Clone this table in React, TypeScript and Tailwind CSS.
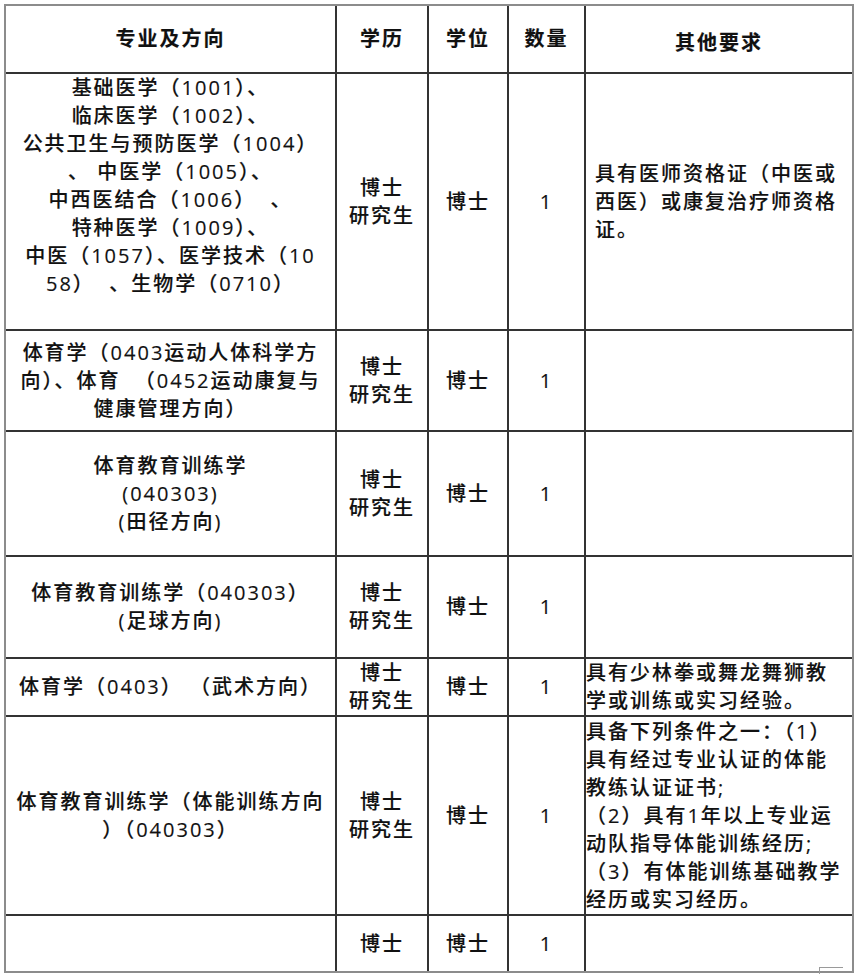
import React from 'react';

type Row = {
  major: string[];
  majorTop?: boolean;
  edu: string[];
  degree: string;
  count: string;
  other: string[];
  otherPad: string;
};

const rows: Row[] = [
  {
    major: [
      '基础医学（1001）、',
      '临床医学（1002）、',
      '公共卫生与预防医学（1004）',
      '、 中医学（1005）、',
      '中西医结合（1006）  、',
      '特种医学（1009）、',
      '中医（1057）、医学技术（10',
      '58）  、生物学（0710）',
    ],
    majorTop: true,
    edu: ['博士', '研究生'],
    degree: '博士',
    count: '1',
    other: ['具有医师资格证（中医或', '西医）或康复治疗师资格', '证。'],
    otherPad: 'pl-[9px]',
  },
  {
    major: ['体育学（0403运动人体科学方', '向）、体育  （0452运动康复与', '健康管理方向）'],
    edu: ['博士', '研究生'],
    degree: '博士',
    count: '1',
    other: [],
    otherPad: 'pl-[9px]',
  },
  {
    major: ['体育教育训练学', '(040303)', '(田径方向)'],
    edu: ['博士', '研究生'],
    degree: '博士',
    count: '1',
    other: [],
    otherPad: 'pl-[9px]',
  },
  {
    major: ['体育教育训练学（040303）', '(足球方向)'],
    edu: ['博士', '研究生'],
    degree: '博士',
    count: '1',
    other: [],
    otherPad: 'pl-[9px]',
  },
  {
    major: ['体育学（0403） （武术方向）'],
    edu: ['博士', '研究生'],
    degree: '博士',
    count: '1',
    other: ['具有少林拳或舞龙舞狮教', '学或训练或实习经验。'],
    otherPad: 'pl-0',
  },
  {
    major: ['体育教育训练学（体能训练方向', '）（040303）'],
    edu: ['博士', '研究生'],
    degree: '博士',
    count: '1',
    other: [
      '具备下列条件之一：（1）',
      '具有经过专业认证的体能',
      '教练认证证书;',
      '（2）具有1年以上专业运',
      '动队指导体能训练经历;',
      '（3）有体能训练基础教学',
      '经历或实习经历。',
    ],
    otherPad: 'pl-0',
  },
  {
    major: [],
    edu: ['博士'],
    degree: '博士',
    count: '1',
    other: [],
    otherPad: 'pl-0',
  },
];

function Lines({ lines }: { lines: string[] }) {
  return (
    <>
      {lines.map((l, i) => (
        <div key={i} className="whitespace-pre">
          {l}
        </div>
      ))}
    </>
  );
}

export default function App() {
  const cell = 'bg-white flex flex-col items-center justify-center';

  return (
    <div className="min-h-screen bg-white pt-[4px] pl-[4px] text-[#111] text-[20px] leading-[28px] tracking-[2px] font-medium [-webkit-text-stroke:0.15px_#111] font-['Open_Sans','Noto_Sans_CJK_SC',sans-serif]">
      <div className="relative w-fit border-2 border-[#8c8c8c]">
        <div className="grid grid-cols-[329px_90px_78px_75px_266px] grid-rows-[66px_255px_99px_123px_100px_56px_197px_55px] gap-[2px] bg-[#333]">
          {/* header */}
          <div className={`${cell} font-bold`}>专业及方向</div>
          <div className={`${cell} font-bold`}>学历</div>
          <div className={`${cell} font-bold`}>学位</div>
          <div className={`${cell} font-bold`}>数量</div>
          <div className={`${cell} font-bold pt-[8px]`}>其他要求</div>

          {rows.map((r, i) => (
            <React.Fragment key={i}>
              <div className={`bg-white flex flex-col items-center text-center ${r.majorTop ? 'justify-start' : 'justify-center'}`}>
                <Lines lines={r.major} />
              </div>
              <div className={cell}>
                <Lines lines={r.edu} />
              </div>
              <div className={cell}>{r.degree}</div>
              <div className={cell}>{r.count}</div>
              <div className={`bg-white flex flex-col justify-center ${r.otherPad}`}>
                <Lines lines={r.other} />
              </div>
            </React.Fragment>
          ))}
        </div>

        {/* faint corner mark bottom right */}
        <div className="absolute left-[813px] top-[961px] h-[8px] w-[24px] border-t border-l border-[#9a9a9a]" />
      </div>
    </div>
  );
}
